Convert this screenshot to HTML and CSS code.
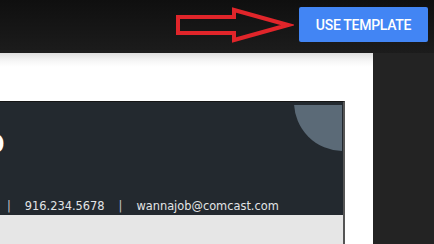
FILE: index.html
```html
<!DOCTYPE html>
<html>
<head>
    <title>Resume Template</title>
    <link rel="stylesheet" href="styles.css">
</head>
<body>
    <div class="topbar">
        <svg class="arrow" width="120" height="40" viewBox="0 0 120 40">
            <polygon points="4,12 60,12 60,5 114,20 60,35 60,28 4,28" fill="none" stroke="#e0252a" stroke-width="4" stroke-linejoin="miter"/>
        </svg>
        <button class="use-btn">USE TEMPLATE</button>
    </div>

    <div class="workspace">
        <div class="page">
            <div class="resume">
                <div class="resume-header">
                    <div class="deco-circle"></div>
                    <div class="name">Jo</div>
                    <div class="contact">
                        <span class="sep">|</span>
                        <span>916.234.5678</span>
                        <span class="sep">|</span>
                        <span>wannajob@comcast.com</span>
                    </div>
                </div>
                <div class="resume-body"></div>
            </div>
        </div>
        <div class="side"></div>
    </div>
</body>
</html>
```

FILE: styles.css
```css
* {
    margin: 0;
    padding: 0;
    box-sizing: border-box;
}

body {
    width: 434px;
    height: 244px;
    overflow: hidden;
    background: #232323;
    font-family: Roboto, 'Liberation Sans', sans-serif;
}

.topbar {
    height: 53px;
    display: flex;
    justify-content: flex-end;
    align-items: flex-start;
    padding: 7px 6px 0 0;
    background: linear-gradient(180deg, #0f0f0f 0%, #1c1c1c 100%);
}

.arrow {
    margin-top: -2px;
    margin-right: 5px;
}

.use-btn {
    width: 129px;
    height: 35px;
    border: none;
    border-radius: 2px;
    background: #4285f4;
    color: #fff;
    font-family: Roboto, sans-serif;
    font-size: 14px;
    font-weight: 500;
    letter-spacing: -0.3px;
}

.workspace {
    display: flex;
    height: 191px;
}

.page {
    width: 373px;
    flex-shrink: 0;
    padding-top: 48px;
    background: linear-gradient(180deg, #dedede 0px, #f6f6f6 8px, #fff 14px);
    overflow: hidden;
}

.side {
    flex-grow: 1;
    background: #232323;
}

.resume {
    margin-left: -200px;
    width: 545px;
    height: 200px;
    border: 1px solid #151515;
    border-right: 2px solid #555;
    display: flex;
    flex-direction: column;
}

.resume-header {
    position: relative;
    height: 113px;
    background: #23292f;
    overflow: hidden;
    display: flex;
    flex-direction: column;
}

.deco-circle {
    position: absolute;
    top: 3px;
    right: 1px;
    width: 48px;
    height: 46px;
    overflow: hidden;
}

.deco-circle:before {
    content: "";
    position: absolute;
    left: 0;
    top: -52px;
    width: 98px;
    height: 98px;
    border-radius: 50%;
    background: #5b6a77;
}

.name {
    margin-top: 18px;
    padding-left: 173px;
    color: #fff;
    font-family: 'Open Sans', sans-serif;
    font-size: 34px;
    font-weight: 600;
    line-height: 40px;
}

.contact {
    margin-top: auto;
    margin-bottom: 1px;
    display: flex;
    gap: 14px;
    padding-left: 206px;
    color: #e2e4e6;
    font-family: 'DejaVu Sans', sans-serif;
    font-size: 11.4px;
    line-height: 16px;
}

.sep {
    color: #c8cacc;
}

.resume-body {
    flex-grow: 1;
    background: #e6e6e6;
}
```
